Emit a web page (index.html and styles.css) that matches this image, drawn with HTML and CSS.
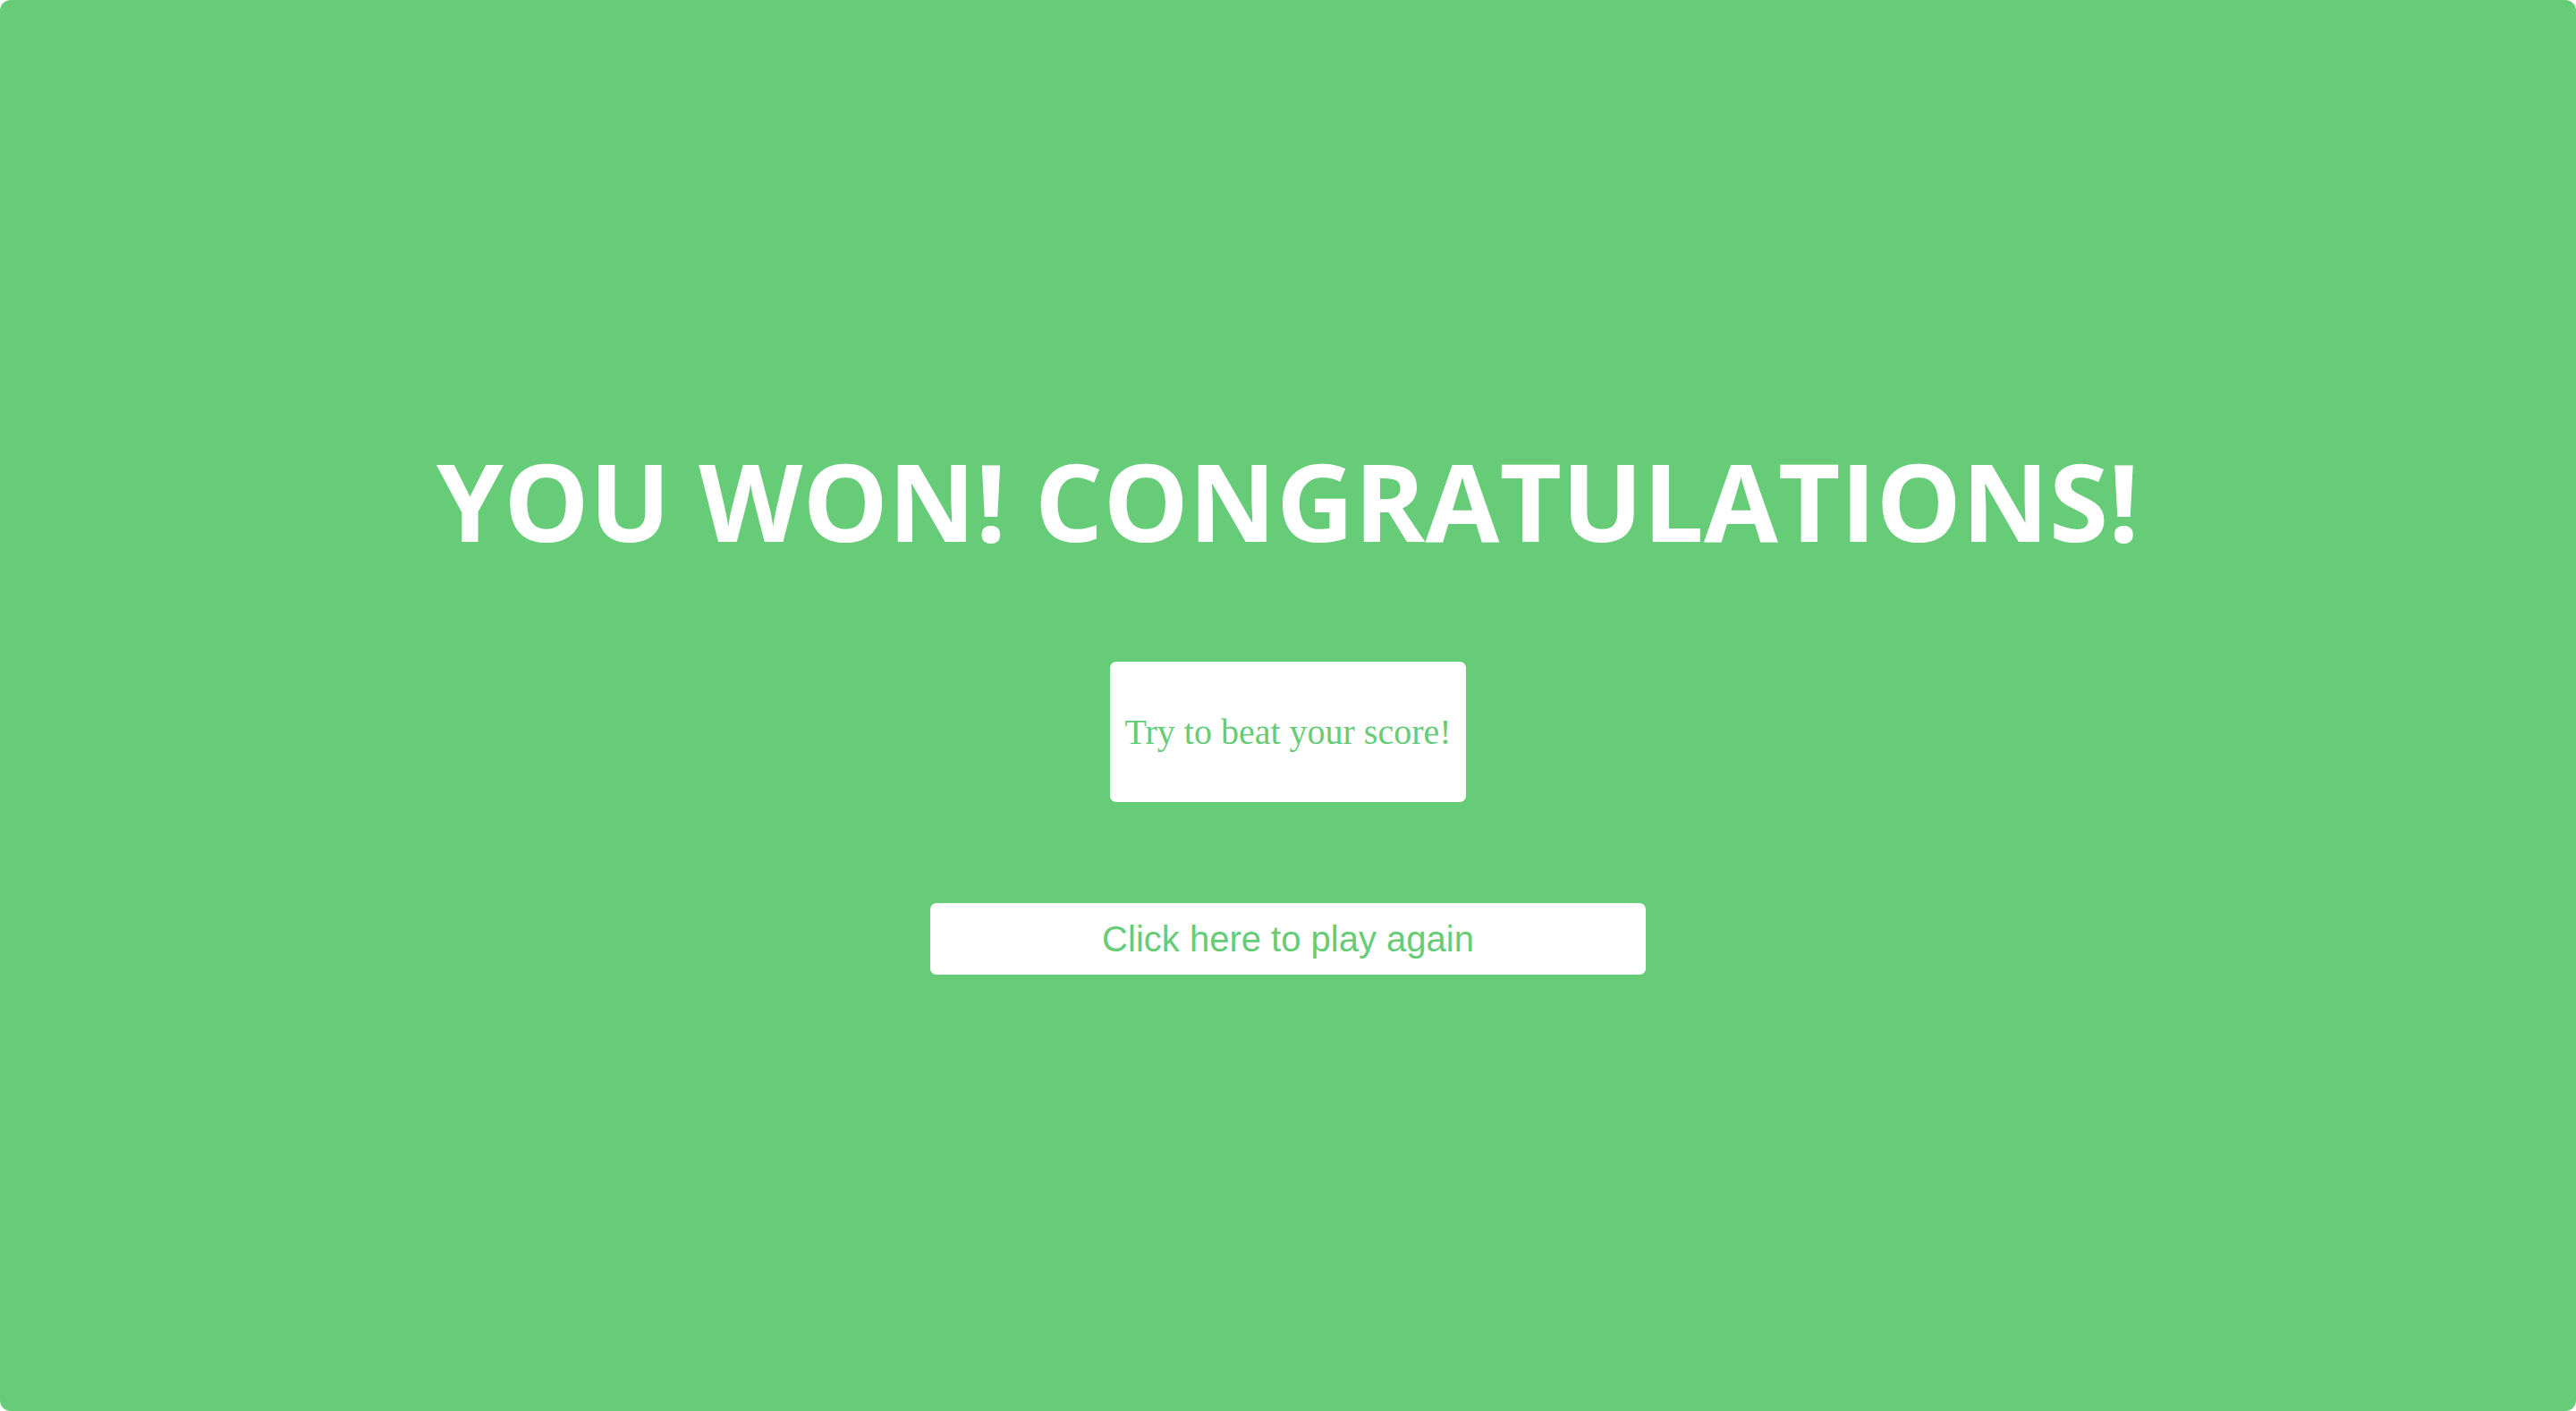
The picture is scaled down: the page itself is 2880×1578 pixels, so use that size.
FILE: index.html
```html
<!DOCTYPE html>
<html>
<head>
<meta charset="utf-8">
<link rel="stylesheet" href="styles.css">
</head>
<body>
<main class="screen">
  <h1 class="title">YOU WON! CONGRATULATIONS!</h1>
  <div class="score">Try to beat your score!</div>
  <button class="again">Click here to play again</button>
</main>
</body>
</html>
```
FILE: styles.css
```css
html, body {
  margin: 0;
  padding: 0;
  background: #ffffff;
}
.screen {
  width: 2880px;
  height: 1578px;
  box-sizing: border-box;
  background: #66cc78;
  border-radius: 12px;
  display: flex;
  flex-direction: column;
  align-items: center;
  padding-top: 480px;
}
.title {
  margin: 0;
  font-family: "Open Sans", sans-serif;
  font-weight: 700;
  font-size: 120px;
  line-height: 160px;
  color: #ffffff;
  letter-spacing: 0.2px;
}
.score {
  margin-top: 100px;
  width: 398px;
  height: 157px;
  box-sizing: border-box;
  background: #ffffff;
  border-radius: 7px;
  display: flex;
  align-items: center;
  justify-content: center;
  font-family: "Liberation Serif", serif;
  font-size: 40px;
  color: #66cc78;
}
.again {
  margin-top: 113px;
  width: 800px;
  height: 80px;
  border: none;
  background: #ffffff;
  border-radius: 7px;
  font-family: "Liberation Sans", Arial, sans-serif;
  font-size: 40px;
  color: #66cc78;
  padding: 0;
}
```
